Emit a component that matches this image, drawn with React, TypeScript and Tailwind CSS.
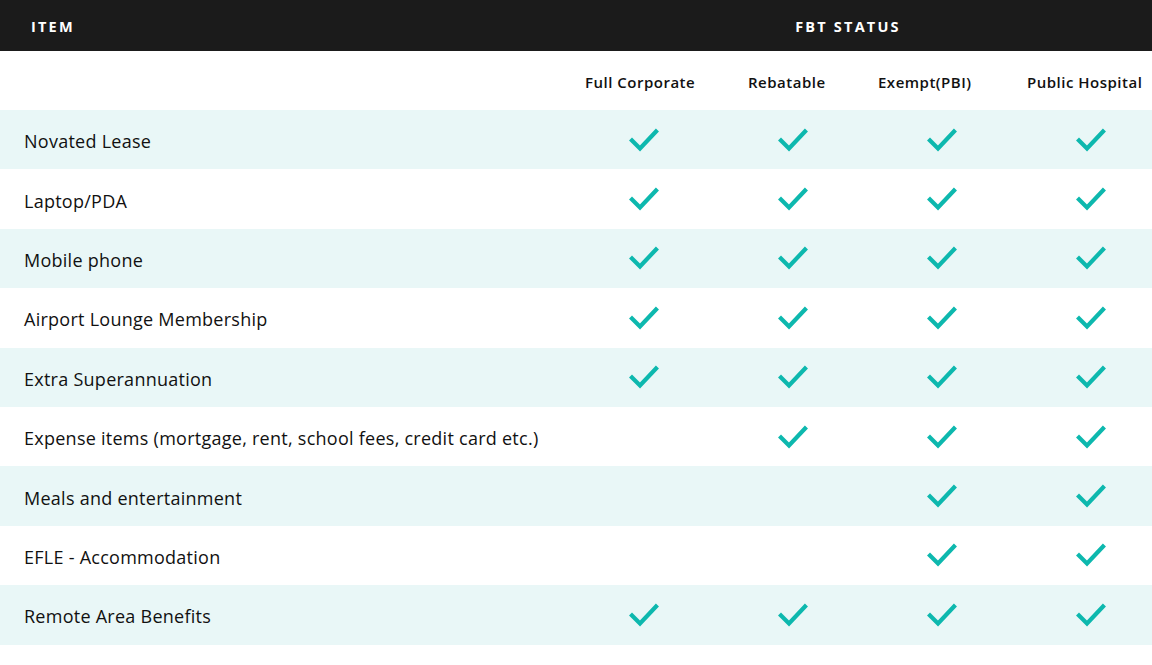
import React from "react";

const rows: { label: string; checks: boolean[] }[] = [
  { label: "Novated Lease", checks: [true, true, true, true] },
  { label: "Laptop/PDA", checks: [true, true, true, true] },
  { label: "Mobile phone", checks: [true, true, true, true] },
  { label: "Airport Lounge Membership", checks: [true, true, true, true] },
  { label: "Extra Superannuation", checks: [true, true, true, true] },
  { label: "Expense items (mortgage, rent, school fees, credit card etc.)", checks: [false, true, true, true] },
  { label: "Meals and entertainment", checks: [false, false, true, true] },
  { label: "EFLE - Accommodation", checks: [false, false, true, true] },
  { label: "Remote Area Benefits", checks: [true, true, true, true] },
];

function Check() {
  return (
    <svg width="30" height="24" viewBox="0 0 30 24" fill="none">
      <path d="M3 12.5 L11 20.5 L27 3.5" stroke="#0db8ae" strokeWidth="4.2" strokeLinecap="square" strokeLinejoin="miter" />
    </svg>
  );
}

export default function App() {
  return (
    <div
      className="w-[1152px] h-[665px] bg-white overflow-hidden text-[#111]"
      style={{ fontFamily: "'Open Sans', Lato, sans-serif" }}
    >
      <div className="h-[51px] bg-[#1b1b1b] flex items-center pt-[3px] text-white font-bold text-[14.5px] tracking-[2.2px]">
        <div className="w-[570px] shrink-0 pl-[31px]">ITEM</div>
        <div className="w-[556px] shrink-0 text-center">FBT STATUS</div>
      </div>
      <div className="h-[59px] flex items-center pt-[4px] text-[15px] tracking-[0.5px] font-semibold text-[#111]">
        <div className="w-[585px] shrink-0" />
        <div className="w-[163px] shrink-0 whitespace-nowrap">Full Corporate</div>
        <div className="w-[130px] shrink-0 whitespace-nowrap">Rebatable</div>
        <div className="w-[149px] shrink-0 whitespace-nowrap">Exempt(PBI)</div>
        <div className="shrink-0 whitespace-nowrap">Public Hospital</div>
      </div>
      {rows.map((r, i) => (
        <div
          key={i}
          className={`h-[59.4px] flex items-center ${i % 2 === 0 ? "bg-[#e9f7f7]" : "bg-white"}`}
        >
          <div className="w-[569px] shrink-0 pl-[24px] pt-[4px] text-[18px] tracking-[0.26px] whitespace-nowrap">{r.label}</div>
          {r.checks.map((c, j) => (
            <div key={j} className="w-[149px] shrink-0 flex justify-center">
              {c ? <Check /> : null}
            </div>
          ))}
        </div>
      ))}
    </div>
  );
}
